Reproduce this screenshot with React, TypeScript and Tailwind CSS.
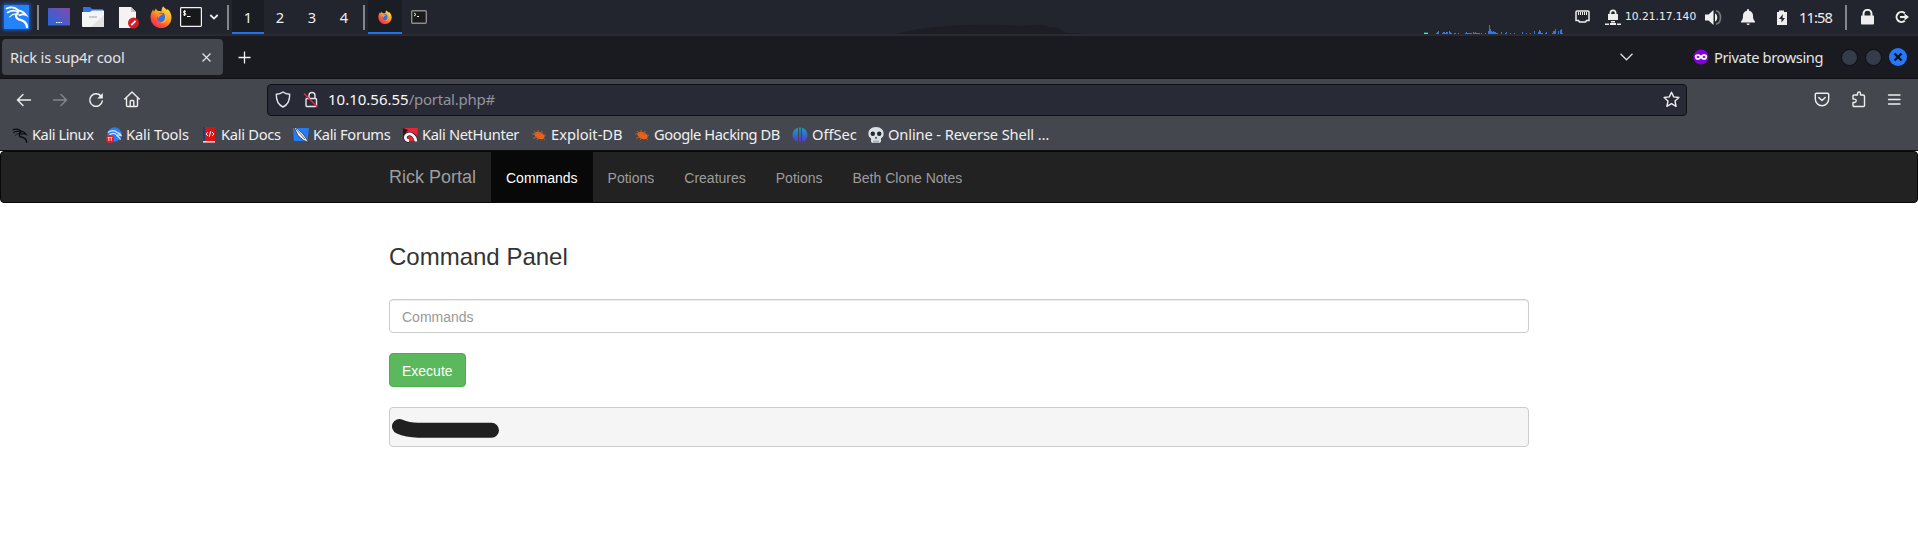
import React from "react";

const ui = "font-['Noto_Sans',sans-serif]";

function Firefox({ size }: { size: number }) {
  return (
    <svg width={size} height={size} viewBox="0 0 22 22" className="block shrink-0">
      <defs>
        <linearGradient id={`fx${size}`} x1="0.85" y1="0.05" x2="0.2" y2="1">
          <stop offset="0" stopColor="#ffe54a" />
          <stop offset="0.4" stopColor="#ffa328" />
          <stop offset="0.7" stopColor="#ff5535" />
          <stop offset="1" stopColor="#f5206a" />
        </linearGradient>
      </defs>
      <path
        d="M13.2 .2c1 1.8 2.6 2.4 3.6 3.8.5-.2.6-.6.6-1 2.3 1.800 4.100 5 4.100 8.500a10.400 10.400 0 0 1-20.900.4C.4 9 1.400 6 3.200 3.300c0 1 .2 1.700.7 2.200C4.700 4.400 5.800 3 6 2.200c.3 1.400 1 2.400 2.500 2.900 1 .1 2.300 0 3 .1.1-1.900.6-3.600 1.700-5z"
        fill={`url(#fx${size})`}
      />
      <circle cx="11.600" cy="11.500" r="4.700" fill="#3c6ee0" />
      <path d="M4.800 7.200c2-.9 3.700-.6 5 .5l3 .3c-.5 1.300-1.900 1.300-3 1.900-.8.500-.4 1.500-.9 2.300-1-.5-1.700-1.400-1.600-2.500z" fill="#ff9226" />
      <path d="M14 6.500c3 1.300 3.800 5 2.400 7.800-1.300 2.500-4 3.300-6.300 2.400 2.200-.1 4.300-1.600 4.800-3.900.5-2.200-.3-4.200-.9-6.300z" fill="#ffb52e" />
    </svg>
  );
}

function Dragon({ color, size, className }: { color: string; size: number; className?: string }) {
  return (
    <svg width={size} height={size} viewBox="0 0 24 24" className={className} fill="none" stroke={color} strokeLinecap="round">
      <path d="M1.500 3.500C6 1.600 10 2 13.500 5.500" strokeWidth="1.700" />
      <path d="M2.500 7.500c4-2.600 8-2.200 11-.5" strokeWidth="1.600" />
      <path d="M4.500 12c2.500-2.700 6-3.700 9-2.700" strokeWidth="1.100" />
      <path d="M13 5.500c3 .2 6 1.700 8 4.500-2-.9-4.500-.8-6.500.2" strokeWidth="1.800" />
      <path d="M12.500 8c-2.500 2.500-1.500 5.500 1.300 6.300 4.200.8 7.700 2.200 8.200 7.700" strokeWidth="2.300" />
    </svg>
  );
}

function Terminal({ small }: { small?: boolean }) {
  return small ? (
    <svg width="16" height="14" viewBox="0 0 16 14" className="ml-[9px] shrink-0">
      <rect x=".7" y=".7" width="14.600" height="12.600" rx="1" fill="#1a1b1c" stroke="#8b8b89" strokeWidth="1.400" />
      <path d="M3 3l2 1.500L3 6M6 6.500h2" fill="none" stroke="#eee" />
    </svg>
  ) : (
    <svg width="22" height="20" viewBox="0 0 22 20" className="ml-2 shrink-0">
      <rect x=".6" y=".6" width="20.800" height="18.800" rx=".8" fill="#171819" stroke="#f2f2f2" strokeWidth="1.200" />
      <path d="M6 4.500c-1-.7-2.700-.5-2.700.6 0 1.200 2.700.7 2.700 2 0 1.100-1.900 1.200-2.900.5M4.600 3.200v5.800M7 9.500h3.500" fill="none" stroke="#fff" />
    </svg>
  );
}

function Sep({ className }: { className: string }) {
  return <div className={`h-[25px] w-[2px] shrink-0 bg-[#85868b] ${className}`} />;
}

const bars: [number, number][] = [
  [12, 1], [13, 2], [14, 3], [18, 1], [19, 2], [20, 2], [21, 1], [22, 2], [23, 2], [25, 3], [26, 2], [27, 1],
  [30, 1], [31, 1], [34, 1], [41, 1], [42, 2], [43, 1], [44, 1], [45, 1], [46, 1], [47, 1], [49, 2], [50, 1],
  [51, 2], [52, 1], [53, 1], [54, 1], [55, 1], [57, 1], [61, 1], [64, 3], [65, 9], [66, 5], [67, 3], [68, 2],
  [69, 3], [70, 2], [71, 2], [72, 1], [73, 1], [77, 2], [81, 1], [82, 2], [86, 1], [90, 1], [98, 2], [102, 1],
  [106, 1], [110, 3], [114, 2], [115, 4], [116, 3], [117, 1], [118, 1], [121, 1], [122, 2], [128, 1], [129, 3],
  [130, 3], [131, 5], [134, 3], [136, 4], [137, 5], [138, 1],
];

function Panel() {
  return (
    <div className={`relative flex h-9 items-center border-b-2 border-[#2a2b31] bg-[#23252e] text-[#eee] ${ui}`}>
      <svg width="190" height="10" viewBox="0 0 190 10" className="absolute bottom-0 left-[895px]">
        <path d="M0 10C40 0 90-1 125 2c12-1 22-2 30 1 14 0 12 7 22 6l13 1z" fill="#1d1e25" />
      </svg>
      <div className="ml-1 flex h-6 w-[25px] shrink-0 items-center justify-center bg-[#2483fb] shadow-[0_0_4px_1px_#1c63d8]">
        <Dragon color="#fff" size={24} />
      </div>
      <Sep className="ml-2" />
      <svg width="22" height="18" viewBox="0 0 22 18" className="ml-[9px] shrink-0">
        <defs>
          <linearGradient id="desk" x1="0" y1="1" x2="1" y2="0">
            <stop offset="0.2" stopColor="#3263d6" />
            <stop offset="1" stopColor="#8549a6" />
          </linearGradient>
        </defs>
        <rect width="22" height="17.500" rx=".6" fill="url(#desk)" />
        <path d="M8 14.500h1.500M10.300 14.500h1.500M12.600 14.500h1.500" stroke="#fff" strokeWidth="1.200" />
      </svg>
      <svg width="22" height="20" viewBox="0 0 22 20" className="ml-3 shrink-0">
        <path d="M1 0h7l2 2h11v8H1z" fill="#2f72e4" />
        <path d="M0 5h8l2-1.500h12V19a1 1 0 0 1-1 1H1a1 1 0 0 1-1-1z" fill="#f4f4f4" />
        <path d="M22 8v11a1 1 0 0 1-1 1H9z" fill="#e2e2e2" />
        <path d="M7 10h8" stroke="#bbb" strokeWidth="1.500" />
      </svg>
      <svg width="22" height="23" viewBox="0 0 22 23" className="ml-[14px] shrink-0">
        <path d="M1 1h12l5 5v16H1z" fill="#f3f3f3" />
        <path d="M13 1v5h5z" fill="#c4c4c4" />
        <circle cx="15.500" cy="17" r="5.500" fill="#d51d24" />
        <path d="M13.300 19.200l4.300-4.300" stroke="#fff" strokeWidth="1.800" />
      </svg>
      <div className="ml-[10px]"><Firefox size={22} /></div>
      <Terminal />
      <svg width="10" height="6" viewBox="0 0 10 6" className="ml-[7px] shrink-0">
        <path d="M1.300 1L5 4.600 8.700 1" fill="none" stroke="#eee" strokeWidth="1.800" />
      </svg>
      <Sep className="ml-2 mr-[3px]" />
      {["1", "2", "3", "4"].map((n) => (
        <div
          key={n}
          className={`flex h-[34px] w-8 shrink-0 items-center justify-center pb-px text-[14.670px] ${n === "1" ? "border-b-2 border-[#1f74f5] bg-[#1b1d24] pt-[2px]" : ""}`}
        >
          {n}
        </div>
      ))}
      <Sep className="mx-[3px]" />
      <div className="flex h-[34px] w-[34px] shrink-0 items-center justify-center border-b-2 border-[#1f74f5] bg-[#1b1d24] pt-[2px]">
        <Firefox size={14} />
      </div>
      <Terminal small />
      <svg width="140" height="34" viewBox="0 0 140 34" className="ml-auto shrink-0" shapeRendering="crispEdges">
        <path d="M0 32h4v1H0z" fill="#1b6d68" />
        <path d="M0 33h4v1H0z" fill="#2ff5d0" />
        {bars.map(([x, h]) => (
          <rect key={x} x={x} y={34 - h} width="1" height={h} fill="#2a79ee" />
        ))}
      </svg>
      <svg width="16" height="14" viewBox="0 0 16 14" className="ml-[11px] shrink-0" fill="none" stroke="#eee">
        <path d="M2 1h11a1 1 0 0 1 1 1v8.500h-2.500l-1 1.500h-6l-1-1.500H1V2a1 1 0 0 1 1-1z" strokeWidth="1.500" />
        <path d="M3.500 2v3M5.500 2v3M7.500 2v3M9.500 2v3M11.500 2v3" />
      </svg>
      <svg width="16" height="17" viewBox="0 0 16 17" className="ml-[14px] shrink-0" fill="#eee">
        <path d="M4.500 5V4a3.500 3.500 0 0 1 7 0v1h1.500v6H3V5zM6.200 5h3.600V4a1.800 1.800 0 0 0-3.600 0z" />
        <path d="M6 12h4v1.500H6zM5 14h6v2H5zM0 14.500h4V16H0zM12 14.500h4V16h-4z" />
      </svg>
      <div className="ml-[4px] w-[72px] shrink-0 whitespace-nowrap font-['DejaVu_Sans',sans-serif] text-[10.670px] leading-[12px]">
        10.21.17.140
      </div>
      <svg width="18" height="17" viewBox="0 0 18 17" className="ml-[7px] shrink-0">
        <path d="M1 5.500h3.500L9.500 1v15l-5-4.500H1z" fill="#eee" />
        <path d="M11 4.500c3 1 3 7 0 8z" fill="#eee" />
        <path d="M12 1.800c6 1.500 6 12 0 13.500" fill="none" stroke="#777980" strokeWidth="1.700" />
      </svg>
      <svg width="16" height="17" viewBox="0 0 16 17" className="ml-[18px] shrink-0" fill="#eee">
        <path d="M7 1a1 1 0 0 1 2 0v.7c2.500.5 4 2.300 4 4.800 0 3 .5 4.500 2 6v1H1v-1c1.500-1.500 2-3 2-6 0-2.500 1.500-4.300 4-4.800zM6.500 14.500h3.200a1.600 1.600 0 0 1-3.200 0z" />
      </svg>
      <svg width="12" height="15" viewBox="0 0 12 15" className="ml-5 shrink-0">
        <path d="M1 2h2V.5h5V2h3v13H1z" fill="#eee" />
        <path d="M7 4L3 9h2.500v3.500L9 8H6.500z" fill="#22242c" />
      </svg>
      <div className="ml-[11px] w-[35px] shrink-0 whitespace-nowrap pb-px text-[14.670px] tracking-[-0.900px]">11:58</div>
      <Sep className="ml-[11px]" />
      <svg width="16" height="16" viewBox="0 0 16 16" className="ml-[13px] shrink-0">
        <path d="M3.500 7V4.800a4 4 0 0 1 8 0V7" fill="none" stroke="#eee" strokeWidth="2" />
        <rect x="1" y="6.500" width="13" height="9" rx=".8" fill="#eee" />
      </svg>
      <svg width="16" height="14" viewBox="0 0 16 14" className="ml-[18px] mr-2 shrink-0">
        <path d="M10.800 3.200a5 5 0 1 0 0 7.600" fill="none" stroke="#eee" strokeWidth="2" />
        <path d="M6 6h4.500V3.500L15 7l-4.500 3.500V8H6z" fill="#eee" />
      </svg>
    </div>
  );
}

function TabStrip() {
  return (
    <div className={`flex h-[43px] items-center border-b border-[#111216] bg-[#1a1b20] text-[#e4e4e6] ${ui}`}>
      <div className="ml-[2px] flex h-9 w-[221px] shrink-0 items-center justify-between rounded-[4px] bg-[#45474f] pl-2 pr-3">
        <span className="whitespace-nowrap text-[14.670px] tracking-[-0.200px]">Rick is sup4r cool</span>
        <svg width="9" height="9" viewBox="0 0 9 9" stroke="#e4e4e6" strokeWidth="1.200">
          <path d="M.5 .5l8 8M8.500 .5l-8 8" />
        </svg>
      </div>
      <svg width="13" height="13" viewBox="0 0 13 13" className="ml-[15px] shrink-0" stroke="#f0f0f0" strokeWidth="1.300">
        <path d="M6.500 .5v12M.5 6.500h12" />
      </svg>
      <svg width="13" height="8" viewBox="0 0 13 8" className="ml-auto shrink-0">
        <path d="M.5 .8l6 6 6-6" fill="none" stroke="#dcdcdc" strokeWidth="1.300" />
      </svg>
      <svg width="16" height="16" viewBox="0 0 16 16" className="ml-[60px] shrink-0">
        <circle cx="8" cy="8" r="7.600" fill="#8000d7" />
        <path d="M8 6.600C6.500 4.800 1.800 4.500 1.800 7.500c0 4.300 4.400 4 6.200 1.700 1.800 2.300 6.200 2.600 6.200-1.700 0-3-4.700-2.700-6.200-.9z" fill="#fff" />
        <ellipse cx="5" cy="8" rx="1.500" ry="1" fill="#8000d7" />
        <ellipse cx="11" cy="8" rx="1.500" ry="1" fill="#8000d7" />
      </svg>
      <span className="ml-[5px] w-[109px] shrink-0 whitespace-nowrap pb-px text-[14.670px] tracking-[-0.400px]">Private browsing</span>
      <div className="ml-[18px] h-[17px] w-[17px] shrink-0 rounded-full border border-[#0c0d10] bg-[#363b49]" />
      <div className="ml-[7px] h-[17px] w-[17px] shrink-0 rounded-full border border-[#0c0d10] bg-[#363b49]" />
      <svg width="18" height="18" viewBox="0 0 18 18" className="ml-[7px] mr-[11px] shrink-0">
        <circle cx="9" cy="9" r="9" fill="#2777fb" />
        <path d="M5.500 5.500l7 7M12.500 5.500l-7 7" stroke="#101420" strokeWidth="2.400" />
      </svg>
    </div>
  );
}

function Toolbar() {
  return (
    <div className={`flex h-[41px] items-center bg-[#45474f] text-[#eee] ${ui}`}>
      <svg width="16" height="14" viewBox="0 0 16 14" className="ml-4 shrink-0" fill="none" stroke="#eee" strokeWidth="1.400" strokeLinecap="round">
        <path d="M1.500 7H14.500M7 1.500L1.500 7 7 12.500" />
      </svg>
      <svg width="16" height="14" viewBox="0 0 16 14" className="ml-5 shrink-0" fill="none" stroke="#85868b" strokeWidth="1.400" strokeLinecap="round">
        <path d="M14.500 7H1.500M9 1.500L14.500 7 9 12.500" />
      </svg>
      <svg width="16" height="16" viewBox="0 0 16 16" className="ml-5 shrink-0" fill="none" stroke="#eee" strokeWidth="1.500">
        <path d="M13.300 4.500A6.300 6.300 0 1 0 14.300 9" strokeLinecap="round" />
        <path d="M14.800 1v5.500H9.300z" fill="#eee" stroke="none" />
      </svg>
      <svg width="16" height="17" viewBox="0 0 16 17" className="ml-5 shrink-0" fill="none" stroke="#eee" strokeWidth="1.400" strokeLinejoin="round" strokeLinecap="round">
        <path d="M.8 8L8 1l7.200 7M2.500 7v7.500a1 1 0 0 0 1 1h9a1 1 0 0 0 1-1V7M6.200 15v-4.500a1 1 0 0 1 1-1h1.600a1 1 0 0 1 1 1V15" />
      </svg>
      <div className="ml-[127px] flex h-8 w-[1420px] shrink-0 items-center rounded-[4px] border border-[#101117] bg-[#282a36]">
        <svg width="16" height="17" viewBox="0 0 16 17" className="ml-[7px] shrink-0" fill="none" stroke="#e6e6e8" strokeWidth="1.400" strokeLinejoin="round">
          <path d="M8 1c2 1.600 4.200 2.200 6.700 2.300C14.800 9 13 13.800 8 16 3 13.800 1.200 9 1.300 3.300 3.800 3.200 6 2.600 8 1z" />
        </svg>
        <svg width="16" height="17" viewBox="0 0 16 17" className="ml-3 shrink-0" fill="none" stroke="#e6e6e8" strokeWidth="1.400">
          <path d="M6 7V4.500a3 3 0 0 1 6 0V7" />
          <rect x="3" y="7.500" width="10.500" height="8" rx="1" />
          <path d="M1 2.500l13.500 13.500" stroke="#e22850" strokeWidth="1.500" />
        </svg>
        <span className="ml-[9px] whitespace-nowrap text-[15px] text-[#f8f8f8]">
          10.10.56.55<span className="tracking-[-0.250px] text-[#93949b]">/portal.php#</span>
        </span>
        <svg width="17" height="17" viewBox="0 0 17 17" className="ml-auto mr-[6px] shrink-0" fill="none" stroke="#eee" strokeWidth="1.400" strokeLinejoin="round">
          <path d="M8.500 1.200l2.200 4.700 5.200.6-3.900 3.500 1.100 5.300-4.600-2.600-4.600 2.600L5 10 1.100 6.500l5.200-.6z" />
        </svg>
      </div>
      <svg width="16" height="15" viewBox="0 0 16 15" className="ml-auto shrink-0" fill="none" stroke="#eee" strokeWidth="1.400" strokeLinecap="round" strokeLinejoin="round">
        <path d="M2.500 1.200h11a1.200 1.200 0 0 1 1.200 1.200V7a6.700 6.700 0 0 1-13.400 0V2.400a1.200 1.200 0 0 1 1.200-1.200zM4.800 5.500L8 8.600l3.200-3.100" />
      </svg>
      <svg width="16" height="17" viewBox="0 0 16 17" className="ml-[21px] shrink-0" fill="none" stroke="#eee" strokeWidth="1.400" strokeLinejoin="round">
        <path d="M2 6.500V5a1 1 0 0 1 1-1h3.500V2.500a1.500 1.500 0 0 1 3 0V4H12a1.500 1.500 0 0 1 1.500 1.500V14.500a1 1 0 0 1-1 1H3a1 1 0 0 1-1-1v-3h1.500a1.700 1.700 0 0 0 0-3.400H2z" />
      </svg>
      <svg width="14" height="12" viewBox="0 0 14 12" className="ml-[20px] mr-[17px] shrink-0" stroke="#eee" strokeWidth="1.300" strokeLinecap="round">
        <path d="M1.500 1h11.500M1.500 5.500h11.500M1.500 10h11.500" />
      </svg>
    </div>
  );
}

const Beetle = (
  <svg width="16" height="16" viewBox="0 0 16 16">
    <ellipse cx="8.500" cy="8.500" rx="5.500" ry="3.300" fill="#e8631a" transform="rotate(25 8.500 8.500)" />
    <path d="M3 4l3 3M7 3l1 4M11 4l-1 4M1 7h4M2 11.500l4-2M6 13l1.500-3M13 8l2 .3M12 11l2 2" stroke="#c75a22" strokeWidth="1" fill="none" />
  </svg>
);

const bookmarks: { label: string; width: string; icon: React.ReactNode }[] = [
  { label: "Kali Linux", width: "w-[94px] tracking-[-0.450px]", icon: <Dragon color="#0b0b0d" size={17} /> },
  {
    label: "Kali Tools",
    width: "w-[95px] tracking-[-0.150px]",
    icon: (
      <svg width="16" height="16" viewBox="0 0 16 16">
        <circle cx="8.500" cy="7.500" r="7.200" fill="#2b7df0" />
        <path d="M2 5.500c4-3 7-2 9.500.2 2 .3 3 1.300 3.500 2.800-2-.8-3-.8-4.300-.4 1 2 3 2 3.800 4.500M3.500 8c2-2 5-2 6.500-.6" fill="none" stroke="#d5e6fb" strokeWidth="1.300" />
        <circle cx="4" cy="12" r="4" fill="#e01e28" />
        <path d="M1.800 10.500h2M2.800 10.500v3.300M4.300 10.500h2M5.300 10.500v3.300" stroke="#fff" strokeWidth=".9" />
      </svg>
    ),
  },
  {
    label: "Kali Docs",
    width: "w-[92px] tracking-[-0.270px]",
    icon: (
      <svg width="16" height="16" viewBox="0 0 16 16">
        <path d="M2 0h12v15.500H2z" fill="#d71518" />
        <path d="M2 0h2v14H2z" fill="#253a70" />
        <path d="M2 14h12v1.600H2z" fill="#dcdce0" />
        <path d="M7 5L5 7l2 2M11 5l2 2-2 2M9.700 4.200L8.300 9.800" stroke="#fff" fill="none" />
      </svg>
    ),
  },
  {
    label: "Kali Forums",
    width: "w-[109px] tracking-[-0.320px]",
    icon: (
      <svg width="16" height="16" viewBox="0 0 16 16">
        <path d="M0 1h16l-1.500 13H1z" fill="#267bf4" />
        <path d="M1 0l3.500 1.800L10 7l3 4 2.500 4.500L10 13 5 8.500 3 4.500z" fill="#f4f4f6" stroke="#1b2233" strokeWidth=".7" />
        <path d="M3 2l9 10" stroke="#20293c" strokeWidth=".7" />
      </svg>
    ),
  },
  {
    label: "Kali NetHunter",
    width: "w-[129px] tracking-[-0.350px]",
    icon: (
      <svg width="16" height="16" viewBox="0 0 16 16">
        <path d="M2 1h14l-2 13H2z" fill="#e92436" />
        <path d="M1 1l5 2-5 6z" fill="#25181c" />
        <path d="M14 14.500C13.500 8.500 8.500 5.500 5 7.700c-3 2.300-1.500 6 2 5.800" fill="none" stroke="#25181c" strokeWidth="4.200" />
        <path d="M14 14.500C13.500 8.500 8.500 5.500 5 7.700c-3 2.300-1.500 6 2 5.800" fill="none" stroke="#f4f4f4" strokeWidth="2.800" />
      </svg>
    ),
  },
  { label: "Exploit-DB", width: "w-[103px]", icon: Beetle },
  { label: "Google Hacking DB", width: "w-[158px] tracking-[-0.420px]", icon: Beetle },
  {
    label: "OffSec",
    width: "w-[76px]",
    icon: (
      <svg width="16" height="16" viewBox="0 0 16 16">
        <defs>
          <linearGradient id="offsec" x1="0" y1="0" x2="0" y2="1">
            <stop offset="0" stopColor="#12a5b8" />
            <stop offset="1" stopColor="#5c2fd6" />
          </linearGradient>
        </defs>
        <path d="M6 .8v14C2.500 14 .5 11.500 .5 8S2.500 1.800 6 .8zM10 .8v14c3.500-.8 5.500-3.300 5.500-6.800S13.500 1.800 10 .8zM7.200 .5h1.600v15H7.200z" fill="url(#offsec)" />
      </svg>
    ),
  },
  {
    label: "Online - Reverse Shell …",
    width: "w-[190px] tracking-[-0.120px]",
    icon: (
      <svg width="16" height="16" viewBox="0 0 16 16">
        <path d="M8 0c5 0 7.600 3 7.600 6.700 0 2.300-.8 3.600-2.600 4.600v3.200c-.5 1.200-1.800 1.500-2.500 1.500h-5C4.600 16 3.400 15.600 3 14.500v-3.200C1.200 10.300.4 9 .4 6.700.4 3 3 0 8 0z" fill="#d9e0e6" />
        <circle cx="4.800" cy="6.800" r="2.200" fill="#25262b" />
        <circle cx="11.200" cy="6.800" r="2.200" fill="#25262b" />
        <path d="M8 9.500l1.300 2H6.700z" fill="#25262b" />
        <path d="M6 13.500V16M8 13.500V16M10 13.500V16" stroke="#5b6067" strokeWidth=".7" />
      </svg>
    ),
  },
];

function Bookmarks() {
  return (
    <div className={`flex h-[31px] items-center border-b border-[#0b0c0e] bg-[#45474f] pl-3 text-[14.670px] text-[#f0f0f0] ${ui}`}>
      {bookmarks.map((b) => (
        <div key={b.label} className={`flex shrink-0 items-center gap-1 whitespace-nowrap ${b.width}`}>
          <span className="flex w-4 shrink-0 justify-center">{b.icon}</span>
          <span className="pb-[2px]">{b.label}</span>
        </div>
      ))}
    </div>
  );
}

function Page() {
  return (
    <main className="bg-white font-['Liberation_Sans',Arial,sans-serif] text-[14px] text-[#333]">
      <div className="bg-white">
        <nav className="h-[52px] rounded-[4px] border border-[#080808] bg-[#222] text-[#9d9d9d]">
          <div className="mx-auto flex h-[50px] w-[1140px] items-center">
            <a className="mr-[15px] w-[87px] whitespace-nowrap pt-px text-[18px]">Rick Portal</a>
            {["Commands", "Potions", "Creatures", "Potions", "Beth Clone Notes"].map((t, i) => (
              <a
                key={i}
                className={`flex h-full items-center px-[15px] pt-[2px] ${i === 0 ? "bg-[#080808] text-white" : ""}`}
              >
                {t}
              </a>
            ))}
          </div>
        </nav>
      </div>
      <section className="mx-auto w-[1140px] pt-[41px]">
        <h3 className="text-[24px] leading-[26px]">Command Panel</h3>
        <input
          placeholder="Commands"
          className="mt-[29px] block h-[34px] w-full rounded-[4px] border border-[#ccc] bg-white px-3 pt-[2px] shadow-[inset_0_1px_1px_rgba(0,0,0,0.075)] placeholder:text-[#999]"
        />
        <button className="mt-5 block h-[34px] rounded-[4px] border border-[#4cae4c] bg-[#5cb85c] px-3 pt-[2px] text-white">
          Execute
        </button>
        <pre className="mt-5 h-10 rounded-[4px] border border-[#ccc] bg-[#f5f5f5]">
          <svg width="112" height="38" viewBox="0 0 112 38">
            <path d="M9.500 18.500C16 21.500 21 22.200 28 22.200H101.500" fill="none" stroke="#202020" strokeWidth="15" strokeLinecap="round" />
          </svg>
        </pre>
      </section>
    </main>
  );
}

export default function App() {
  return (
    <div className="min-h-[537px] w-[1918px] overflow-hidden bg-white">
      <Panel />
      <TabStrip />
      <Toolbar />
      <Bookmarks />
      <Page />
    </div>
  );
}
